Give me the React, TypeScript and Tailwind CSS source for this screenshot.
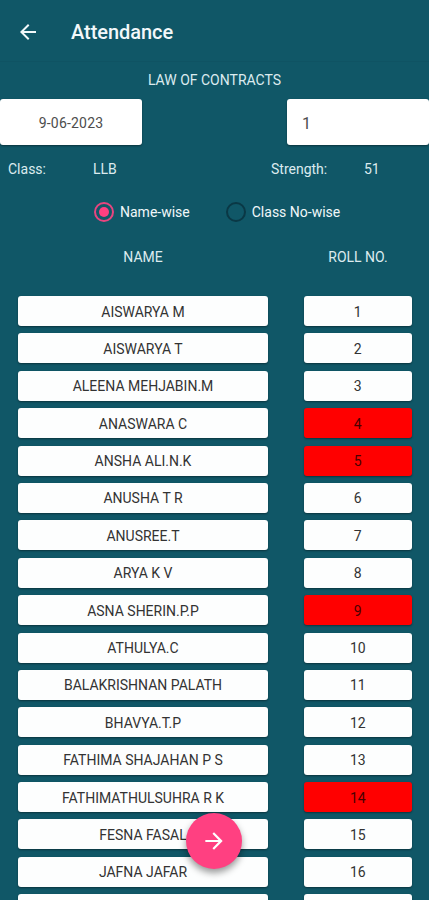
interface Student {
  name: string;
  roll: number;
  absent?: boolean;
}

const students: Student[] = [
  { name: 'AISWARYA M', roll: 1 },
  { name: 'AISWARYA T', roll: 2 },
  { name: 'ALEENA MEHJABIN.M', roll: 3 },
  { name: 'ANASWARA C', roll: 4, absent: true },
  { name: 'ANSHA ALI.N.K', roll: 5, absent: true },
  { name: 'ANUSHA T R', roll: 6 },
  { name: 'ANUSREE.T', roll: 7 },
  { name: 'ARYA K V', roll: 8 },
  { name: 'ASNA SHERIN.P.P', roll: 9, absent: true },
  { name: 'ATHULYA.C', roll: 10 },
  { name: 'BALAKRISHNAN PALATH', roll: 11 },
  { name: 'BHAVYA.T.P', roll: 12 },
  { name: 'FATHIMA SHAJAHAN P S', roll: 13 },
  { name: 'FATHIMATHULSUHRA R K', roll: 14, absent: true },
  { name: 'FESNA FASAL', roll: 15 },
  { name: 'JAFNA JAFAR', roll: 16 },
];

function Radio({ label, checked }: { label: string; checked?: boolean }) {
  return (
    <button className="flex items-center gap-[6px]">
      <span
        className={`flex h-5 w-5 items-center justify-center rounded-full border-2 ${
          checked ? 'border-[#e8457f]' : 'border-[#0a3845]'
        }`}
      >
        {checked && <span className="h-[10px] w-[10px] rounded-full bg-[#ff4081]" />}
      </span>
      <span className="text-[#f0f8fa]">{label}</span>
    </button>
  );
}

function StudentRow({ student }: { student: Student }) {
  const box = 'flex h-[30px] items-center justify-center rounded-[3px] pt-[2px] shadow-[0_1px_2px_rgba(0,0,0,0.4)]';
  return (
    <div className="flex h-[37.4px] shrink-0 items-start pl-[18px]">
      <div className={`${box} w-[250px] bg-[#fdfefe]`}>{student.name}</div>
      <div className={`${box} ml-[36px] w-[107.5px] ${student.absent ? 'bg-[#ff0000] text-[#480000]' : 'bg-[#fdfefe]'}`}>
        {student.roll || ''}
      </div>
    </div>
  );
}

export default function App() {
  return (
    <div className="relative flex h-[900px] w-[429px] flex-col overflow-hidden bg-[#105767] font-[Roboto,sans-serif] text-[14px] text-[#dcebef]">
      <header className="flex h-[62px] shrink-0 items-center border-b border-[#0f5363] pt-[3px] pl-[16px]">
        <svg className="h-6 w-6" viewBox="0 0 24 24" fill="#f2f8fa">
          <path d="M20 11H7.83l5.59-5.59L12 4l-8 8 8 8 1.41-1.41L7.83 13H20v-2z" />
        </svg>
        <h1 className="ml-[31px] text-[20px] font-medium tracking-[-0.05px] text-[#f2f8fa]">Attendance</h1>
      </header>

      <div className="flex h-[37px] shrink-0 items-center justify-center">LAW OF CONTRACTS</div>

      <div className="flex h-[46px] shrink-0 justify-between text-[#4d4d4d]">
        <div className="flex w-[142px] items-center justify-center rounded-[3px] bg-white pt-[2px] tracking-[0.2px] shadow-[0_1px_2px_rgba(0,0,0,0.4)]">
          9-06-2023
        </div>
        <div className="flex w-[142px] items-center rounded-[3px] bg-white pt-[3px] pl-[15px] text-[16px] shadow-[0_1px_2px_rgba(0,0,0,0.4)]">
          1
        </div>
      </div>

      <div className="flex h-[49px] shrink-0 items-center pl-[8px]">
        <span className="w-[85px]">Class:</span>
        <span className="w-[178px]">LLB</span>
        <span className="w-[93px]">Strength:</span>
        <span>51</span>
      </div>

      <div className="flex h-[36px] shrink-0 items-center gap-[36px] pl-[94px]">
        <Radio label="Name-wise" checked />
        <Radio label="Class No-wise" />
      </div>

      <div className="flex h-[66px] shrink-0 items-start pt-[17px] pl-[18px] text-center">
        <span className="w-[250px]">NAME</span>
        <span className="ml-[36px] w-[108px]">ROLL NO.</span>
      </div>

      <main className="flex flex-col text-[#333333]">
        {students.map((student) => (
          <StudentRow key={student.roll} student={student} />
        ))}
        <StudentRow student={{ name: '', roll: 0 }} />
      </main>

      <button className="absolute top-[812.5px] left-[186px] flex h-14 w-14 items-center justify-center rounded-full bg-[#ff4081] shadow-[0_4px_7px_rgba(0,0,0,0.4)]">
        <svg className="h-[26px] w-[26px]" viewBox="0 0 24 24" fill="white">
          <path d="M12 4l-1.41 1.41L16.17 11H4v2h12.17l-5.58 5.59L12 20l8-8z" />
        </svg>
      </button>
    </div>
  );
}
